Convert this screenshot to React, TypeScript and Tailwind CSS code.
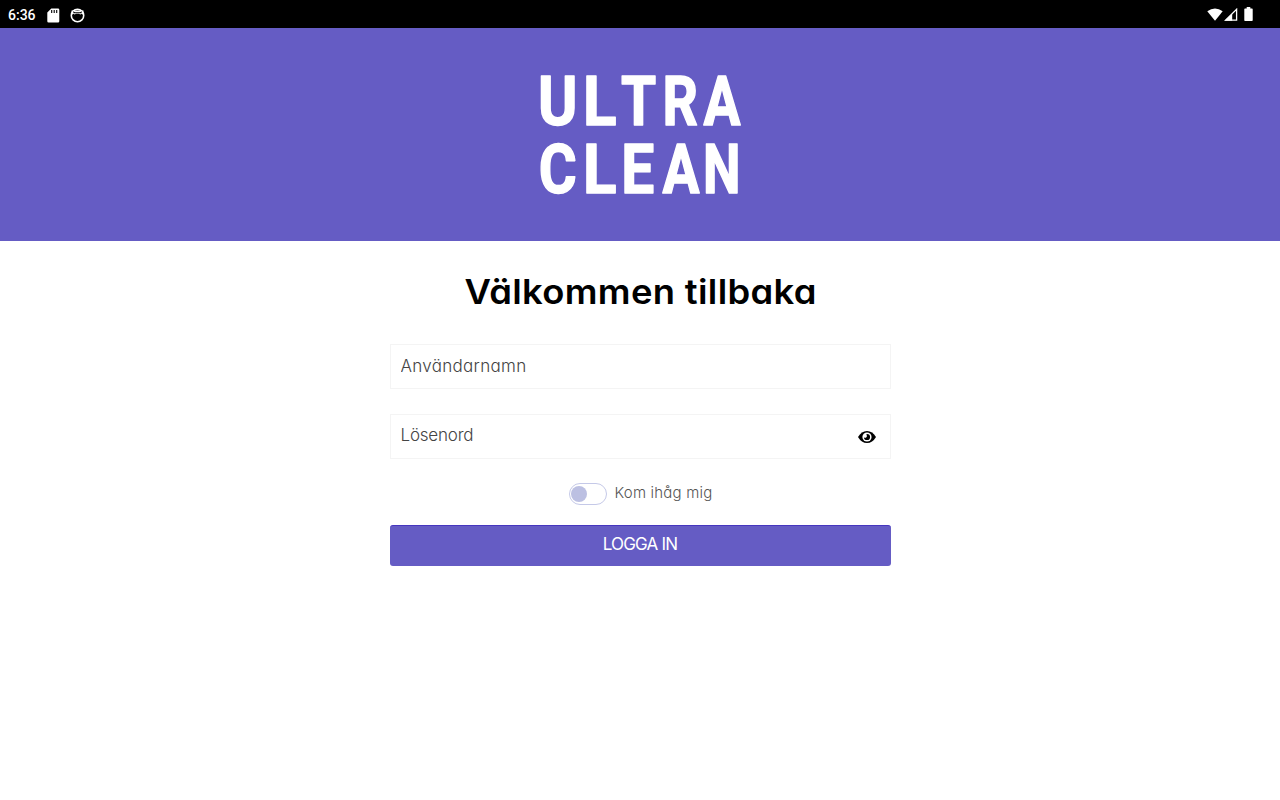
import { useState } from "react";

type Glyph = { char: string; x: number; length: number };

const logoRows: { y: number; glyphs: Glyph[] }[] = [
  {
    y: 59.5,
    glyphs: [
      { char: "U", x: 8, length: 39.5 },
      { char: "L", x: 53, length: 33.5 },
      { char: "T", x: 91, length: 35.2 },
      { char: "R", x: 132.5, length: 35.5 },
      { char: "A", x: 173.5, length: 37 },
    ],
  },
  {
    y: 127.6,
    glyphs: [
      { char: "C", x: 8.8, length: 38 },
      { char: "L", x: 53, length: 33.5 },
      { char: "E", x: 91.2, length: 33 },
      { char: "A", x: 132.5, length: 37 },
      { char: "N", x: 173, length: 37.5 },
    ],
  },
];

function Logo() {
  return (
    <svg width="220" height="140" viewBox="0 0 220 140" aria-label="Ultra Clean" className="overflow-visible">
      {logoRows.map((row) => (
        <text
          key={row.y}
          y={row.y}
          fill="#fff"
          stroke="#fff"
          strokeWidth="1.5"
          strokeLinejoin="round"
          className="font-[Roboto,sans-serif] text-[68px] font-bold"
        >
          {row.glyphs.map((g) => (
            <tspan key={g.char} x={g.x} textLength={g.length} lengthAdjust="spacingAndGlyphs">
              {g.char}
            </tspan>
          ))}
        </text>
      ))}
    </svg>
  );
}

function StatusBar() {
  return (
    <div className="flex h-7 items-center justify-between bg-black pl-2 pr-[27px] text-white">
      <div className="flex items-center">
        <span className="w-[39px] pt-px font-[Roboto,sans-serif] text-sm font-medium leading-none">6:36</span>
        <svg width="13" height="15" viewBox="0 0 13 15" className="mt-0.5">
          <path d="M4.3 .5H11a1.3 1.3 0 0 1 1.3 1.3v11.4a1.3 1.3 0 0 1-1.3 1.3H1.6A1.3 1.3 0 0 1 .3 13.2V4.5z" fill="#fff" />
          <path d="M4.7 2v3M7.2 2v3M9.7 2v3" stroke="#000" strokeWidth="1.1" />
        </svg>
        <svg width="15" height="15" viewBox="0 0 15 15" className="ml-[10px] mt-0.5">
          <circle cx="7.5" cy="7.5" r="6.2" fill="none" stroke="#fff" strokeWidth="1.6" />
          <path d="M1.5 2.500h12v4.500l-1.800-1.200-1.400.7-1.300-.7H6l-1.300.7-1.400-.7L1.500 7z" fill="#fff" />
          <path d="M3 3.200l2 1.100h5l2-1.100-.6 2.100H3.600z" fill="#000" />
        </svg>
      </div>
      <div className="flex items-center">
        <svg width="16" height="13" viewBox="0 0 16 13">
          <path d="M8 12.7.3 3.3Q8-2.5 15.7 3.3z" fill="#fff" />
        </svg>
        <svg width="14" height="13" viewBox="0 0 14 13" className="ml-px">
          <path d="M1.6 12.1 12.6 1.3v10.8z" fill="none" stroke="#fff" strokeWidth="1.3" />
          <path d="M.5 12.7 8.2 5.4v7.3z" fill="#fff" />
        </svg>
        <svg width="9" height="14" viewBox="0 0 9 14" className="ml-[6px]">
          <path d="M2.7 0h3.6v1.6H8a.7.7 0 0 1 .7.7v11a.7.7 0 0 1-.7.7H1a.7.7 0 0 1-.7-.7v-11a.7.7 0 0 1 .7-.7h1.7z" fill="#fff" />
        </svg>
      </div>
    </div>
  );
}

function EyeIcon() {
  return (
    <svg width="18" height="14" viewBox="0 0 18 14">
      <path d="M0 7Q3.5 1 9 1t9 6q-3.5 6-9 6T0 7z" fill="#000" />
      <circle cx="9" cy="7" r="4.6" fill="#fff" />
      <path d="M9 3.9A3.1 3.1 0 1 1 5.9 7.2a1.7 1.7 0 0 0 2.5-2.5Q8.4 4.1 9 3.9z" fill="#000" />
    </svg>
  );
}

export default function App() {
  const [remember, setRemember] = useState(false);
  const [showPassword, setShowPassword] = useState(false);

  return (
    <div className="min-h-screen bg-white font-[Inter,sans-serif] [font-feature-settings:'cv11']">
      <StatusBar />
      <header className="flex h-[213px] items-center justify-center bg-[#655cc4]">
        <Logo />
      </header>

      <main className="mx-auto flex w-[501px] flex-col items-center pt-[31px]">
        <h1 className="scale-x-[1.07] whitespace-nowrap pl-px text-[34px] font-semibold leading-10 tracking-[0.3px] text-black">
          Välkommen tillbaka
        </h1>

        <input
          placeholder="Användarnamn"
          className="mt-8 h-[45px] w-full border border-[#f4f4f4] px-[10px] pb-px text-[17px] font-light tracking-[0.3px] text-[#333] outline-none placeholder:text-[#444]"
        />
        <div className="mt-[25px] flex h-[45px] w-full items-center border border-[#f4f4f4] pl-[10px] pr-3.5">
          <input
            type={showPassword ? "text" : "password"}
            placeholder="Lösenord"
            className="flex-1 pb-px text-[17px] font-light tracking-[-0.2px] text-[#333] outline-none placeholder:text-[#444]"
          />
          <button aria-label="Visa lösenord" onClick={() => setShowPassword(!showPassword)}>
            <EyeIcon />
          </button>
        </div>

        <label className="mt-6 flex h-[22px] items-center gap-2 pl-px">
          <button
            role="switch"
            aria-checked={remember}
            onClick={() => setRemember(!remember)}
            className={`flex h-[22px] w-[38px] items-center rounded-full border border-[#c5c9e8] px-px ${remember ? "justify-end" : "justify-start"}`}
          >
            <span className="size-4 rounded-full bg-[#bcc0e2]" />
          </button>
          <span className="w-[98px] whitespace-nowrap pb-0.5 text-[15px] font-light tracking-[0.2px] text-[#555]">Kom ihåg mig</span>
        </label>

        <button className="mt-5 h-[41px] w-full rounded-[3px] border-t border-[#4636bf] bg-[#655cc4] pb-0.5 text-[17px] tracking-[-0.8px] text-white">
          LOGGA IN
        </button>
      </main>
    </div>
  );
}
